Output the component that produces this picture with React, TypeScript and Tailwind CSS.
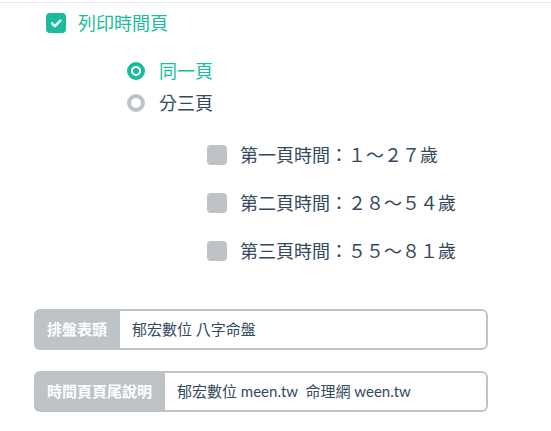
import React from "react";

function Check() {
  return (
    <div className="w-[20px] h-[20px] rounded-[4px] bg-[#1abc9c] flex items-center justify-center shrink-0">
      <svg width="20" height="20" viewBox="0 0 20 20">
        <path d="M6 10.3 L8.9 13.2 L14.4 7.6" fill="none" stroke="white" strokeWidth="2.4" strokeLinecap="round" strokeLinejoin="round" />
      </svg>
    </div>
  );
}

function Radio({ on }: { on: boolean }) {
  return on ? (
    <div className="w-[18px] h-[18px] rounded-full border-[4px] border-[#1abc9c] flex items-center justify-center shrink-0">
      <div className="w-[6px] h-[6px] rounded-full bg-[#1abc9c]" />
    </div>
  ) : (
    <div className="w-[18px] h-[18px] rounded-full border-[4px] border-[#bdc3c7] shrink-0" />
  );
}

function InputGroup({ label, value, labelW }: { label: string; value: string; labelW: string }) {
  return (
    <div className="ml-[34px] w-[454px] h-[41px] flex rounded-[6px] overflow-hidden">
      <div className={`${labelW} bg-[#bdc3c7] text-white font-bold text-[15px] flex items-center pl-[13px] shrink-0`}>
        {label}
      </div>
      <div className="flex-1 border-2 border-l-0 border-[#bdc3c7] rounded-r-[6px] flex items-center pl-[12px] text-[15px] text-[#34495e] whitespace-pre">
        {value}
      </div>
    </div>
  );
}

export default function App() {
  const rows = ["第一頁時間：１～２７歲", "第二頁時間：２８～５４歲", "第三頁時間：５５～８１歲"];
  return (
    <div className="w-[551px] h-[431px] bg-white font-['Lato','Noto_Sans_CJK_TC',sans-serif] text-[#34495e] overflow-hidden">
      <div className="pt-[2px]">
        <div className="h-px bg-[#ebebeb]" />
      </div>
      <div className="pl-[46px] mt-[10px] h-[20px] flex items-center gap-[12px]">
        <Check />
        <span className="text-[18px] text-[#1abc9c] leading-none">列印時間頁</span>
      </div>
      <div className="pl-[127px] mt-[22px]">
        <div className="h-[32px] flex items-center gap-[14px]">
          <Radio on />
          <span className="text-[18px] text-[#1abc9c]">同一頁</span>
        </div>
        <div className="h-[32px] flex items-center gap-[14px]">
          <Radio on={false} />
          <span className="text-[18px]">分三頁</span>
        </div>
      </div>
      <div className="pl-[207px] mt-[12px]">
        {rows.map((r) => (
          <div key={r} className="h-[48px] flex items-center gap-[13px]">
            <div className="w-[20px] h-[20px] rounded-[4px] bg-[#bdc3c7] shrink-0" />
            <span className="text-[18px]">{r}</span>
          </div>
        ))}
      </div>
      <div className="mt-[34px]">
        <InputGroup label="排盤表頭" value="郁宏數位 八字命盤" labelW="w-[86px]" />
      </div>
      <div className="mt-[21px]">
        <InputGroup label="時間頁頁尾說明" value="郁宏數位 meen.tw  命理網 ween.tw" labelW="w-[131px]" />
      </div>
    </div>
  );
}
